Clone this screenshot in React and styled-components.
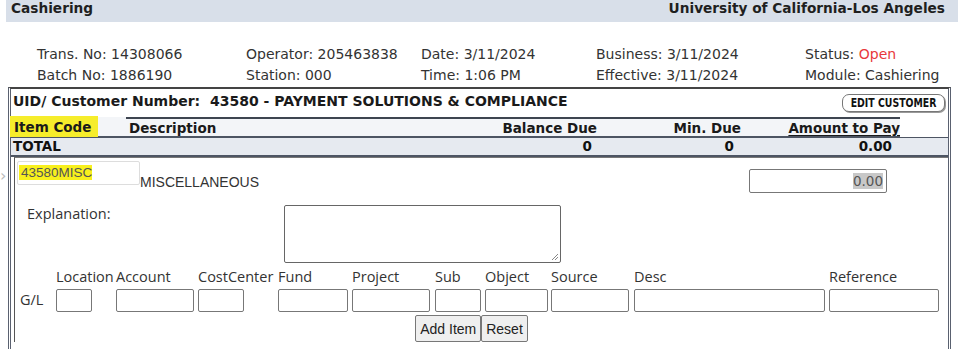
import React from 'react';
import styled, { createGlobalStyle } from 'styled-components';

const GlobalStyle = createGlobalStyle`
  html, body {
    margin: 0;
    padding: 0;
    background: #fff;
  }
  body {
    font-family: 'DejaVu Sans', Verdana, sans-serif;
    color: #222;
  }
`;

const infoRows = [
  [
    { label: 'Trans. No:', value: '14308066' },
    { label: 'Operator:', value: '205463838' },
    { label: 'Date:', value: '3/11/2024' },
    { label: 'Business:', value: '3/11/2024' },
    { label: 'Status:', value: 'Open', alert: true },
  ],
  [
    { label: 'Batch No:', value: '1886190' },
    { label: 'Station:', value: '000' },
    { label: 'Time:', value: '1:06 PM' },
    { label: 'Effective:', value: '3/11/2024' },
    { label: 'Module:', value: 'Cashiering' },
  ],
];

// col = width of the column, input = width of the field box
const glFields = [
  { label: 'Location', col: 56, input: 36 },
  { label: 'Account', col: 78, input: 78 },
  { label: 'CostCenter', col: 76, input: 46 },
  { label: 'Fund', col: 70, input: 70 },
  { label: 'Project', col: 79, input: 78 },
  { label: 'Sub', col: 46, input: 46 },
  { label: 'Object', col: 62, input: 63 },
  { label: 'Source', col: 79, input: 78 },
  { label: 'Desc', col: 191, input: 191 },
  { label: 'Reference', col: 110, input: 110 },
];

export default function App() {
  return (
    <>
      <GlobalStyle />
      <HeaderBar>
        <span>Cashiering</span>
        <span>University of California-Los Angeles</span>
      </HeaderBar>

      <InfoGrid>
        {infoRows.flat().map((item, idx) => (
          <InfoCell key={idx}>
            {item.label} <InfoValue $alert={item.alert}>{item.value}</InfoValue>
          </InfoCell>
        ))}
      </InfoGrid>

      <Panel>
        <TitleRow>
          <Title>UID/ Customer Number:&nbsp; 43580 - PAYMENT SOLUTIONS &amp; COMPLIANCE</Title>
          <EditButton>
            <span>EDIT CUSTOMER</span>
          </EditButton>
        </TitleRow>

        <HeadRow>
          <HeadCell $highlight>Item Code</HeadCell>
          <HeadCell>Description</HeadCell>
          <HeadCell $right>Balance Due</HeadCell>
          <HeadCell $right>Min. Due</HeadCell>
          <HeadCell $right $underline>Amount to Pay</HeadCell>
          <HeadSpacer />
        </HeadRow>
        <TotalRow>
          <TotalCell>TOTAL</TotalCell>
          <TotalCell />
          <TotalCell $right="5px">0</TotalCell>
          <TotalCell $right="7px">0</TotalCell>
          <TotalCell $right="8px">0.00</TotalCell>
          <TotalCell />
        </TotalRow>

        <ItemBox>
          <ItemLine>
            <CodeInput>
              <Marked>43580MISC</Marked>
            </CodeInput>
            <ItemName>MISCELLANEOUS</ItemName>
            <AmountInput>
              <Selected>0.00</Selected>
            </AmountInput>
          </ItemLine>

          <ExplainLine>
            <FieldLabel>Explanation:</FieldLabel>
            <TextArea>
              <svg width="9" height="9" viewBox="0 0 9 9">
                <path d="M8 2 L2 8 M8 5 L5 8" stroke="#888" strokeWidth="1" />
              </svg>
            </TextArea>
          </ExplainLine>

          <GLRow>
            <GLTag>G/L</GLTag>
            {glFields.map((f) => (
              <GLField key={f.label} $col={f.col}>
                <GLLabel>{f.label}</GLLabel>
                <GLInput $w={f.input} />
              </GLField>
            ))}
          </GLRow>

          <ButtonRow>
            <FormButton>Add Item</FormButton>
            <FormButton>Reset</FormButton>
          </ButtonRow>
        </ItemBox>
      </Panel>
      <SideMark>›</SideMark>
    </>
  );
}

const HeaderBar = styled.div`
  display: flex;
  justify-content: space-between;
  align-items: flex-start;
  height: 22px;
  margin: 0 8px 0 6px;
  padding: 0 13px 0 5px;
  box-sizing: border-box;
  background: #d8dfe9;
  font-size: 13.7px;
  line-height: 17px;
  font-weight: bold;
  color: #1f1f1f;
`;

const InfoGrid = styled.div`
  display: grid;
  grid-template-columns: 209px 175px 175px 209px 1fr;
  padding: 22px 0 0 37px;
`;

const InfoCell = styled.div`
  font-size: 14px;
  line-height: 21px;
  color: #333;
  white-space: nowrap;
`;

const InfoValue = styled.span`
  color: ${({ $alert }) => ($alert ? '#e8383b' : '#333')};
`;

const Panel = styled.div`
  margin: 1px 0 0 8px;
  width: 937px;
  border-top: 2px solid #444;
  border-left: 3px double #5a6170;
  border-right: 3px double #5a6170;
  height: 270px;
`;

const TitleRow = styled.div`
  display: flex;
  justify-content: space-between;
  align-items: center;
  height: 28px;
  box-sizing: border-box;
  padding: 0 3px 4px 2px;
`;

const Title = styled.div`
  font-size: 14px;
  font-weight: bold;
  color: #1a1a1a;
  white-space: nowrap;
`;

const EditButton = styled.button`
  font-family: 'DejaVu Sans', sans-serif;
  font-size: 13px;
  font-weight: bold;
  color: #111;
  background: #fff;
  border: 1px solid #777;
  border-radius: 7px;
  height: 18px;
  width: 103px;
  padding: 0;
  box-shadow: 1px 1px 0 #999;
  margin-top: 3px;
  display: flex;
  align-items: center;
  justify-content: center;
  overflow: hidden;
  span {
    display: inline-block;
    white-space: nowrap;
    transform: scaleX(0.72);
    line-height: 16px;
  }
`;

const rowColumns = '115px 1fr 130px 144px 159px 48px';

const HeadRow = styled.div`
  display: grid;
  grid-template-columns: ${rowColumns};
  height: 19px;
  border-bottom: 2px solid #4d5563;
  background: #f3f5f8;
`;

const HeadCell = styled.div`
  font-size: 13.5px;
  font-weight: bold;
  line-height: 18px;
  color: #1a1a1a;
  border-top: 2px solid #3e4550;
  padding: 0 ${({ $right }) => ($right ? '0' : '3px')};
  text-align: ${({ $right }) => ($right ? 'right' : 'left')};
  text-decoration: ${({ $underline }) => ($underline ? 'underline' : 'none')};
  text-underline-offset: 2px;
  white-space: nowrap;
  ${({ $highlight }) =>
    $highlight &&
    `
    background: #f6ed2b;
    margin: -1px 28px 0 -1px;
    padding: 0 4px;
    border-top-color: #f6ed2b;
  `}
`;

const HeadSpacer = styled.div`
  background: #fff;
`;

const TotalRow = styled.div`
  display: grid;
  grid-template-columns: ${rowColumns};
  height: 17px;
  background: #e6eaf0;
  border-bottom: 2px solid #4d5563;
`;

const TotalCell = styled.div`
  font-size: 13.5px;
  font-weight: bold;
  line-height: 17px;
  color: #111;
  padding: ${({ $right }) => ($right ? `0 ${$right} 0 0` : '0 2px')};
  text-align: ${({ $right }) => ($right ? 'right' : 'left')};
`;

const ItemBox = styled.div`
  margin-left: 3px;
  border-left: 1px solid #555;
  border-top: 1px solid #777;
  padding: 3px 0 0 2px;
  font-family: 'Liberation Sans', Arial, sans-serif;
`;

const ItemLine = styled.div`
  display: flex;
  align-items: flex-start;
  height: 40px;
`;

const CodeInput = styled.div`
  width: 113px;
  height: 22px;
  border: 1px solid #ddd;
  border-radius: 2px;
  padding: 0 4px;
  font-size: 13.5px;
  line-height: 22px;
  color: #555;
`;

const Marked = styled.span`
  background: #f8f01d;
  padding: 0 0 0 2px;
  margin-left: -3px;
`;

const ItemName = styled.div`
  font-size: 14px;
  color: #333;
  margin-top: 13px;
  flex: 1;
`;

const AmountInput = styled.div`
  margin: 8px 61px 0 0;
  width: 130px;
  height: 22px;
  border: 1px solid #777;
  border-radius: 2px;
  padding: 0 3px;
  text-align: right;
  font-family: 'DejaVu Sans', Verdana, sans-serif;
  font-size: 13.5px;
  line-height: 22px;
  color: #555;
`;

const Selected = styled.span`
  background: #c8c8c8;
`;

const ExplainLine = styled.div`
  display: flex;
  align-items: flex-start;
  padding-left: 10px;
  height: 62px;
  margin-top: 4px;
`;

const FieldLabel = styled.div`
  font-family: 'Open Sans', sans-serif;
  font-size: 14.5px;
  color: #333;
  width: 257px;
  margin-top: -1px;
`;

const TextArea = styled.div`
  width: 275px;
  height: 56px;
  border: 1px solid #666;
  border-radius: 2px;
  display: flex;
  align-items: flex-end;
  justify-content: flex-end;
  svg {
    display: block;
    margin: 0 1px 1px 0;
  }
`;

const GLRow = styled.div`
  display: flex;
  align-items: flex-end;
  gap: 4px;
  padding-left: 3px;
`;

const GLTag = styled.div`
  font-family: 'Open Sans', sans-serif;
  font-size: 14.5px;
  color: #333;
  width: 32px;
  margin-bottom: 3px;
`;

const GLField = styled.div`
  display: flex;
  flex-direction: column;
  align-items: flex-start;
  width: ${({ $col }) => $col}px;
  font-family: 'Open Sans', sans-serif;
`;

const GLLabel = styled.div`
  font-size: 14.5px;
  color: #333;
  white-space: nowrap;
  height: 19px;
  line-height: 19px;
  margin-bottom: 3px;
`;

const GLInput = styled.div`
  width: ${({ $w }) => $w}px;
  height: 23px;
  border: 1px solid #777;
  border-radius: 2px;
  box-sizing: border-box;
`;

const ButtonRow = styled.div`
  display: flex;
  justify-content: center;
  padding-top: 3px;
  margin-left: -22px;
`;

const FormButton = styled.button`
  font-family: 'Liberation Sans', Arial, sans-serif;
  font-size: 14px;
  color: #222;
  background: #efefef;
  border: 1px solid #777;
  border-radius: 2px;
  height: 27px;
  padding: 0 4px;
`;

const SideMark = styled.div`
  position: absolute;
  left: 0;
  top: 166px;
  font-size: 16px;
  color: #bbb;
`;
